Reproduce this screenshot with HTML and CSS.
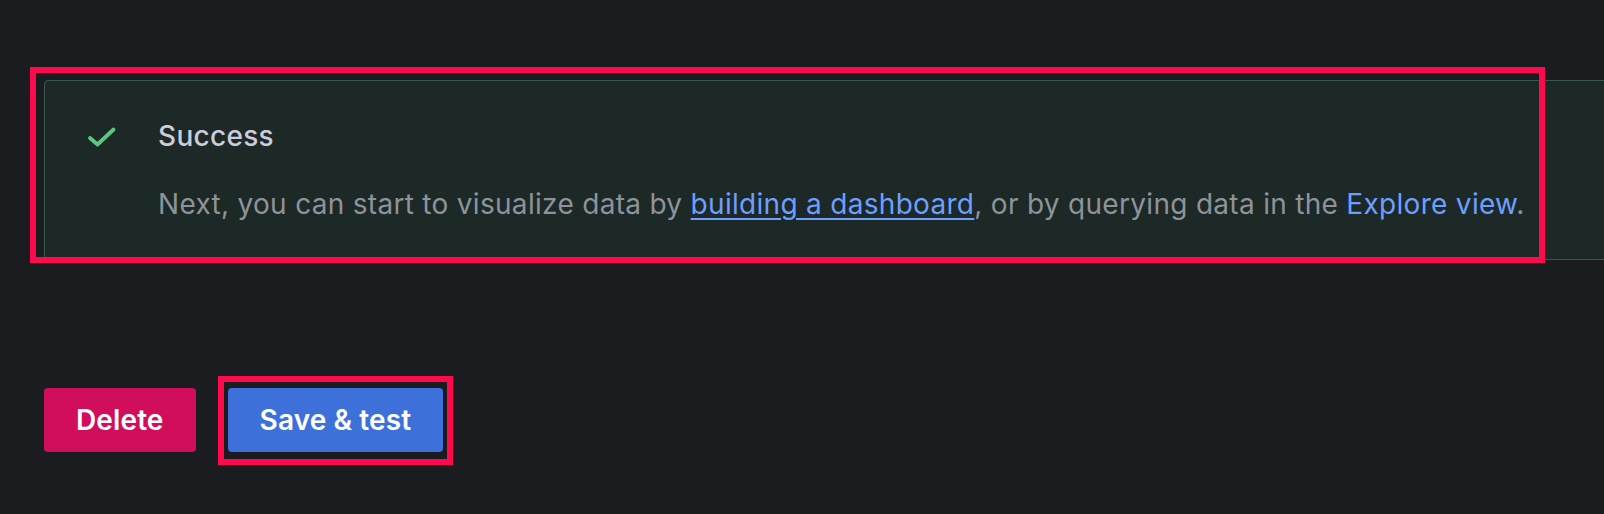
FILE: index.html
```html
<!DOCTYPE html>
<html lang="en">
<head>
<meta charset="utf-8">
<title>Data source saved</title>
<link rel="stylesheet" href="styles.css">
</head>
<body>
<main class="page">
  <div class="alert">
    <div class="alert-icon">
      <svg width="32" height="32" viewBox="0 0 32 32" aria-hidden="true">
        <polyline points="4,17 11.5,23.5 27.5,8.5" fill="none" stroke="#5ec683" stroke-width="3.8" stroke-linecap="round" stroke-linejoin="round"/>
      </svg>
    </div>
    <div class="alert-body">
      <div class="alert-title">Success</div>
      <div class="alert-desc">Next, you can start to visualize data by <a class="link link-underline" href="#">building a dashboard</a>, or by querying data in the <a class="link" href="#">Explore view</a>.</div>
    </div>
  </div>
  <div class="actions">
    <button class="btn btn-danger" type="button">Delete</button>
    <button class="btn btn-primary" type="button">Save &amp; test</button>
  </div>
  <div class="highlight highlight-alert"></div>
  <div class="highlight highlight-save"></div>
</main>
</body>
</html>
```
FILE: styles.css
```css
html, body {
  margin: 0;
  padding: 0;
  background: #1b1c20;
  overflow: hidden;
}

body {
  width: 1604px;
  height: 514px;
  font-family: Inter, "Noto Sans", "Liberation Sans", sans-serif;
}

.page {
  position: relative;
  width: 1604px;
  height: 514px;
  padding: 80px 0 0 44px;
  box-sizing: border-box;
}

.alert {
  display: flex;
  align-items: flex-start;
  width: 1600px;
  box-sizing: border-box;
  background: #1c2927;
  border: 1px solid #39584a;
  border-radius: 4px;
  padding: 34px 32px 34px 41px;
}

.alert-icon {
  flex: none;
  width: 32px;
  height: 32px;
  margin-top: 6px;
  margin-right: 40px;
}

.alert-icon svg {
  display: block;
}

.alert-body {
  display: flex;
  flex-direction: column;
  gap: 26px;
}

.alert-title {
  font-size: 28px;
  line-height: 42px;
  font-weight: 500;
  letter-spacing: 0.3px;
  color: #ccccdc;
}

.alert-desc {
  font-size: 28px;
  line-height: 42px;
  font-weight: 400;
  letter-spacing: 0.3px;
  color: #8e9399;
  white-space: nowrap;
}

.link {
  color: #6e9fff;
  text-decoration: none;
}

.link-underline {
  text-decoration: underline;
  text-underline-offset: 4px;
  text-decoration-thickness: 2px;
}

.actions {
  display: flex;
  gap: 32px;
  margin-top: 128px;
}

.btn {
  height: 64px;
  padding: 0 32px;
  border: none;
  border-radius: 4px;
  font-family: Inter, "Noto Sans", "Liberation Sans", sans-serif;
  font-size: 28px;
  font-weight: 600;
  letter-spacing: 0.12px;
  color: #ffffff;
  cursor: pointer;
}

.btn-danger {
  background: #d10e5c;
}

.btn-primary {
  background: #3d71d9;
}

.highlight {
  position: absolute;
  border: 6px solid #ff0a4f;
  box-sizing: border-box;
  pointer-events: none;
}

.highlight-alert {
  left: 30px;
  top: 67px;
  width: 1515px;
  height: 196px;
}

.highlight-save {
  left: 218px;
  top: 376px;
  width: 235px;
  height: 89px;
}
```
